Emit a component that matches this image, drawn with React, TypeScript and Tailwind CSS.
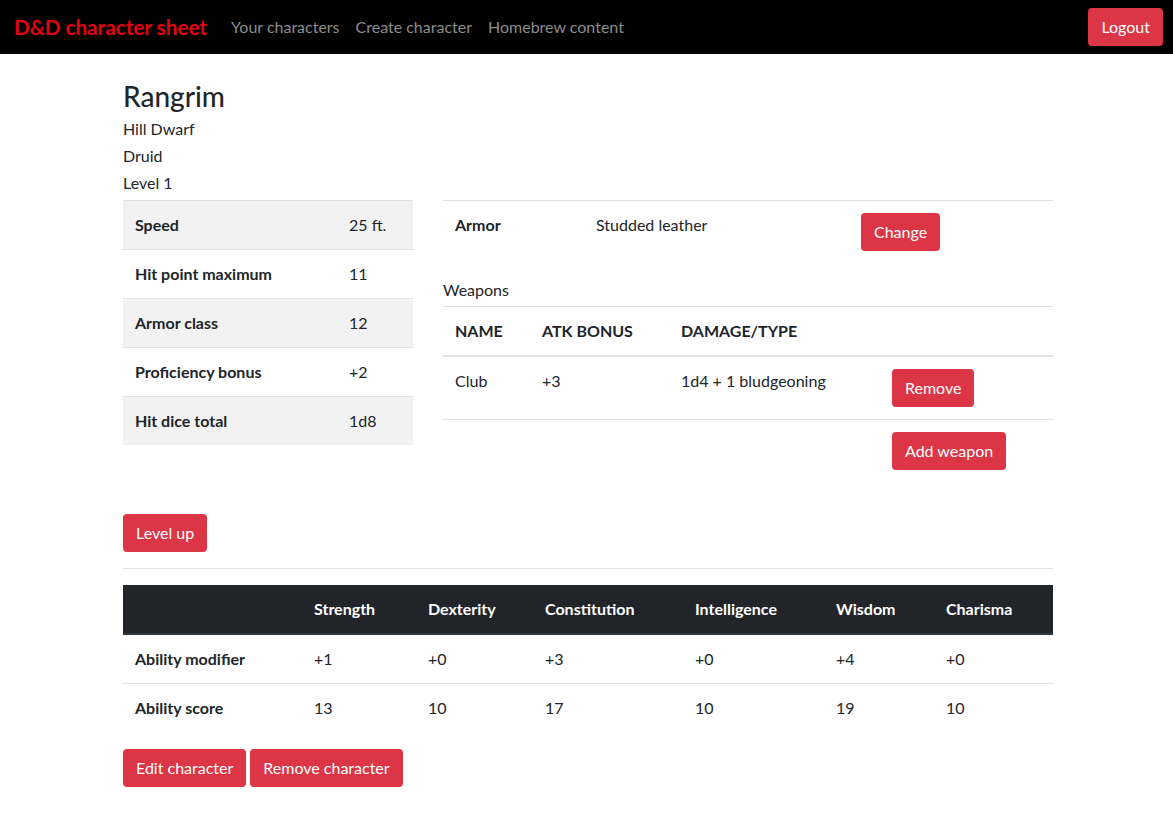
import React from "react";

const stats = [
  { label: "Speed", value: "25 ft." },
  { label: "Hit point maximum", value: "11" },
  { label: "Armor class", value: "12" },
  { label: "Proficiency bonus", value: "+2" },
  { label: "Hit dice total", value: "1d8" },
];

const abilities = [
  { name: "Strength", mod: "+1", score: "13" },
  { name: "Dexterity", mod: "+0", score: "10" },
  { name: "Constitution", mod: "+3", score: "17" },
  { name: "Intelligence", mod: "+0", score: "10" },
  { name: "Wisdom", mod: "+4", score: "19" },
  { name: "Charisma", mod: "+0", score: "10" },
];

const abilityCols = "grid grid-cols-[179px_114px_117px_150px_141px_110px_1fr]";

function Btn({ children }: { children: React.ReactNode }) {
  return (
    <button className="h-[38px] px-[13px] rounded-[4px] bg-[#dc3545] text-white text-[16px] leading-6">
      {children}
    </button>
  );
}

export default function App() {
  return (
    <div className="min-h-screen bg-white text-[#212529] text-[16px] leading-6 font-[Lato,sans-serif]">
      {/* navbar */}
      <nav className="h-[54px] bg-black flex items-center pl-[14px] pr-[10px]">
        <span className="text-[20.7px] font-bold text-[#e6000e] mr-4">D&amp;D character sheet</span>
        <div className="flex">
          <a className="px-2 text-[#8c8c8c]">Your characters</a>
          <a className="px-2 text-[#8c8c8c]">Create character</a>
          <a className="px-2 text-[#8c8c8c]">Homebrew content</a>
        </div>
        <div className="ml-auto">
          <Btn>Logout</Btn>
        </div>
      </nav>

      <main className="w-[930px] ml-[123px] pt-[25px]">
        <h3 className="text-[28px] leading-[34px] font-medium">Rangrim</h3>
        <div className="mt-[2px]">
          <p className="leading-[27px]">Hill Dwarf</p>
          <p className="leading-[27px]">Druid</p>
          <p className="leading-[27px]">Level 1</p>
        </div>

        <div className="mt-[4px] flex gap-[30px]">
          {/* stats */}
          <div className="w-[290px] self-start">
            {stats.map((s, i) => (
              <div
                key={s.label}
                className={`grid grid-cols-[214px_1fr] border-t border-[#dee2e6] ${i % 2 === 0 ? "bg-[#f2f2f2]" : ""}`}
              >
                <div className="p-3 font-bold">{s.label}</div>
                <div className="p-3">{s.value}</div>
              </div>
            ))}
          </div>

          {/* equipment */}
          <div className="flex-1">
            <div className="grid grid-cols-[141px_265px_1fr] border-t border-[#dee2e6]">
              <div className="p-3 font-bold">Armor</div>
              <div className="p-3">Studded leather</div>
              <div className="p-3">
                <Btn>Change</Btn>
              </div>
            </div>
            <p className="mt-[15px]">Weapons</p>
            <div className="mt-1">
              <div className="grid grid-cols-[87px_139px_211px_1fr] border-t border-[#dee2e6] border-b-2 font-bold uppercase">
                <div className="p-3">Name</div>
                <div className="p-3">Atk bonus</div>
                <div className="p-3">Damage/Type</div>
                <div className="p-3"></div>
              </div>
              <div className="grid grid-cols-[87px_139px_211px_1fr] border-b border-[#dee2e6]">
                <div className="p-3">Club</div>
                <div className="p-3">+3</div>
                <div className="p-3">1d4 + 1 bludgeoning</div>
                <div className="p-3">
                  <Btn>Remove</Btn>
                </div>
              </div>
              <div className="grid grid-cols-[437px_1fr]">
                <div></div>
                <div className="p-3">
                  <Btn>Add weapon</Btn>
                </div>
              </div>
            </div>
          </div>
        </div>

        <div className="mt-[32px]">
          <Btn>Level up</Btn>
        </div>
        <hr className="mt-4 mb-4 border-t border-[#e5e5e5]" />

        {/* abilities */}
        <div>
          <div className={`${abilityCols} bg-[#212529] text-white font-bold border-b-2 border-[#32383e]`}>
            <div className="p-3"></div>
            {abilities.map((a) => (
              <div key={a.name} className="p-3">{a.name}</div>
            ))}
          </div>
          <div className={`${abilityCols}`}>
            <div className="p-3 font-bold">Ability modifier</div>
            {abilities.map((a) => (
              <div key={a.name} className="p-3">{a.mod}</div>
            ))}
          </div>
          <div className={`${abilityCols} border-t border-[#dee2e6]`}>
            <div className="p-3 font-bold">Ability score</div>
            {abilities.map((a) => (
              <div key={a.name} className="p-3">{a.score}</div>
            ))}
          </div>
        </div>

        <div className="mt-[17px] flex gap-1 pb-6">
          <Btn>Edit character</Btn>
          <Btn>Remove character</Btn>
        </div>
      </main>
    </div>
  );
}
